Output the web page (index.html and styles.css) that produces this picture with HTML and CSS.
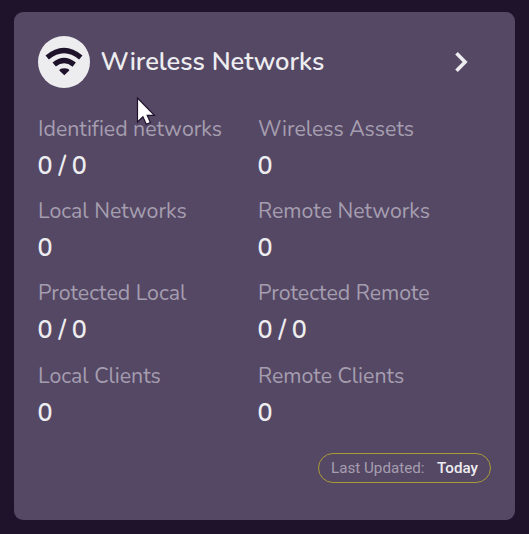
FILE: index.html
```html
<!DOCTYPE html>
<html lang="en">
<head>
<meta charset="utf-8">
<title>Wireless Networks</title>
<link rel="stylesheet" href="styles.css">
</head>
<body>
<main class="card">
  <header class="card-header">
    <svg class="wifi" viewBox="0 0 52 52" aria-hidden="true">
      <circle cx="26" cy="26" r="26"/>
      <path class="arc" d="M9.2 21.6Q26 7.5 42.8 21.6M16.2 28.6Q26 20.4 36.2 28.6"/>
      <path class="dot" d="M21.3 34.4C21.3 31.6 31.3 31.6 31.3 34.4L26.3 39.2Z"/>
    </svg>
    <h1 class="title">Wireless Networks</h1>
    <svg class="chevron" viewBox="0 0 14 22" aria-hidden="true"><path d="M2.5 2.2L11.1 11L2.5 19.8"/></svg>
  </header>
  <dl class="stats">
    <div class="stat"><dt>Identified networks</dt><dd>0 / 0</dd></div>
    <div class="stat"><dt>Wireless Assets</dt><dd>0</dd></div>
    <div class="stat"><dt>Local Networks</dt><dd>0</dd></div>
    <div class="stat"><dt>Remote Networks</dt><dd>0</dd></div>
    <div class="stat"><dt>Protected Local</dt><dd>0 / 0</dd></div>
    <div class="stat"><dt>Protected Remote</dt><dd>0 / 0</dd></div>
    <div class="stat"><dt>Local Clients</dt><dd>0</dd></div>
    <div class="stat"><dt>Remote Clients</dt><dd>0</dd></div>
  </dl>
  <footer class="updated"><span>Last Updated:</span><strong>Today</strong></footer>
</main>
<svg class="cursor" viewBox="0 0 20 28" aria-hidden="true"><path d="M1.5 1V25L6.9 19.8L10.3 27.2L14.4 25.5L11.2 18.3H18.4Z"/></svg>
</body>
</html>
```
FILE: styles.css
```css
* { box-sizing: border-box; }
body { margin: 0; height: 534px; padding: 12px 14px 14px; background: #1f122b; overflow: hidden; }
.card { display: flex; flex-direction: column; height: 508px; padding: 24px; border-radius: 9px; background: #554865; font-family: Nunito, Lato, sans-serif; color: #ededf0; }
.card-header { display: flex; align-items: center; height: 52px; }
.wifi { width: 52px; height: 52px; fill: #ededf0; }
.wifi .arc { fill: none; stroke: #1f122b; stroke-width: 5.2; }
.wifi .dot { fill: #1f122b; }
.title { margin: 0 auto 0 10.5px; font-size: 25.5px; font-weight: 600; line-height: 36px; white-space: nowrap; }
.chevron { width: 14px; height: 22px; margin-right: 23px; fill: none; stroke: #ededf0; stroke-width: 3.6; }
.stats { display: grid; grid-template-columns: 220px 1fr; grid-auto-rows: 82.2px; margin: 26px 0 0; }
dt { color: #a59eaf; font-size: 21.3px; line-height: 30px; white-space: nowrap; font-variant-ligatures: none; }
dd { margin: 5px 0 0 -.4px; font-size: 25px; font-weight: 650; line-height: 34px; letter-spacing: -.35px; }
.updated { display: flex; align-self: flex-end; align-items: center; justify-content: space-between; width: 173px; height: 30px; margin-top: 10.2px; padding: 0 12px; border: 1px solid #a99b35; border-radius: 15px; font: 15.2px/20px Roboto, sans-serif; white-space: nowrap; }
.updated span { color: #a59eaf; }
.updated strong { font-weight: 500; }
.cursor { position: absolute; left: 136px; top: 97px; width: 20px; height: 28px; fill: #fff; stroke: #1f122b; stroke-width: 1.2; }
```
